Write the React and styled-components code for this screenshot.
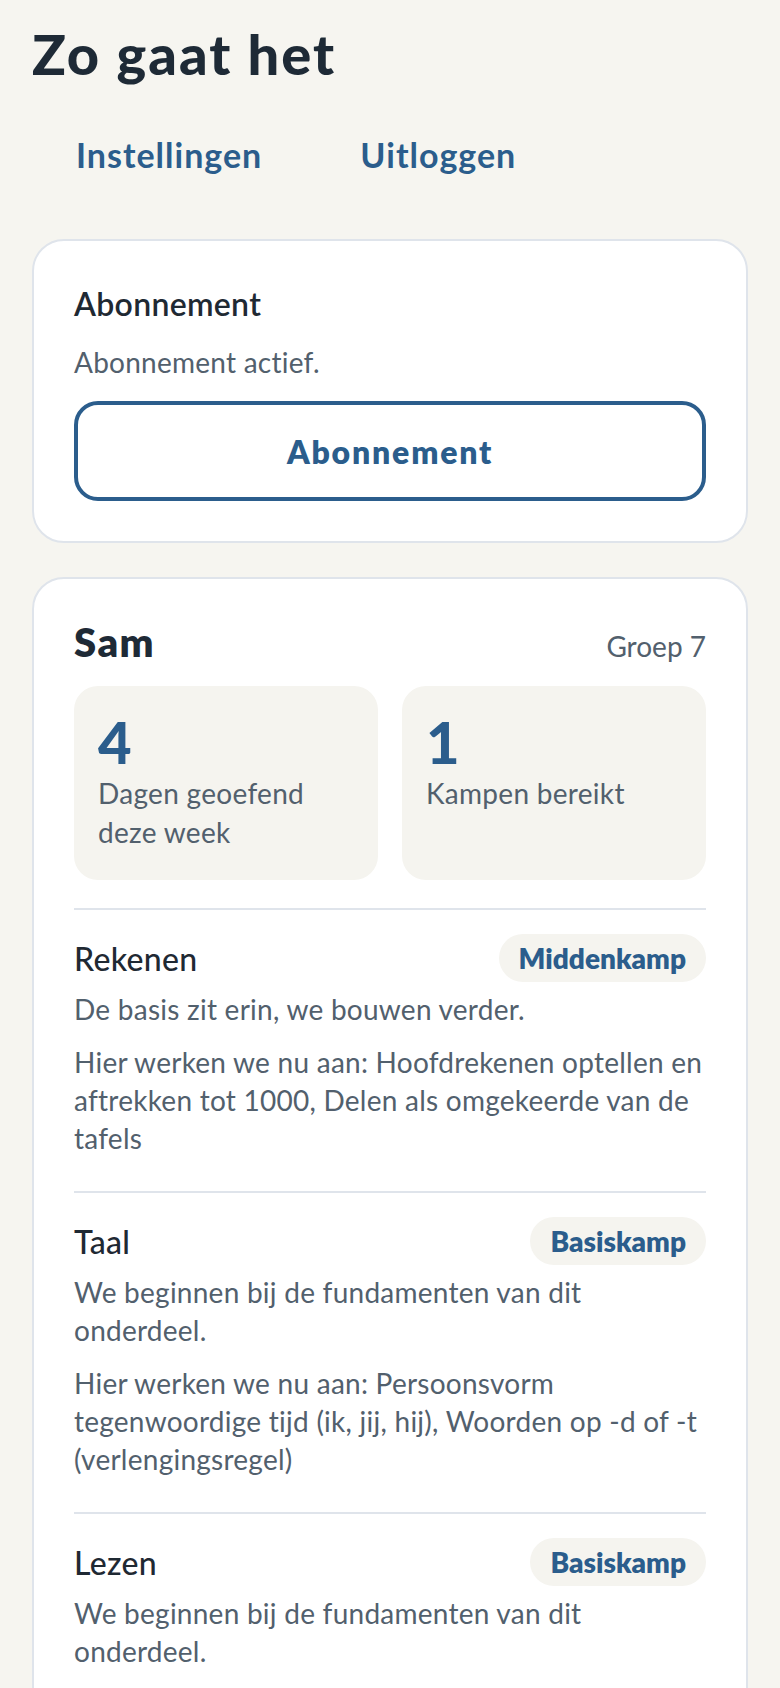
import React from "react";
import styled, { createGlobalStyle } from "styled-components";

const GlobalStyle = createGlobalStyle`
  html, body {
    margin: 0;
    padding: 0;
    background: #f6f5f0;
  }
  body {
    font-family: "Lato", "Noto Sans", sans-serif;
    color: #1f2933;
  }
`;

const subjects = [
  {
    name: "Rekenen",
    level: "Middenkamp",
    summary: "De basis zit erin, we bouwen verder.",
    focus:
      "Hier werken we nu aan: Hoofdrekenen optellen en aftrekken tot 1000, Delen als omgekeerde van de tafels",
  },
  {
    name: "Taal",
    level: "Basiskamp",
    summary: "We beginnen bij de fundamenten van dit onderdeel.",
    focus:
      "Hier werken we nu aan: Persoonsvorm tegenwoordige tijd (ik, jij, hij), Woorden op -d of -t (verlengingsregel)",
  },
  {
    name: "Lezen",
    level: "Basiskamp",
    summary: "We beginnen bij de fundamenten van dit onderdeel.",
    focus: "Hier werken we nu aan: Hoofdgedachte van een tekst, Verwijswoorden",
  },
];

export default function App() {
  return (
    <Page>
      <GlobalStyle />
      <Title>Zo gaat het</Title>
      <Nav>
        <NavButton>Instellingen</NavButton>
        <NavButton>Uitloggen</NavButton>
      </Nav>

      <Card>
        <CardTitle>Abonnement</CardTitle>
        <Muted>Abonnement actief.</Muted>
        <OutlineButton>Abonnement</OutlineButton>
      </Card>

      <Card>
        <ChildHeader>
          <ChildName>Sam</ChildName>
          <Group>Groep 7</Group>
        </ChildHeader>
        <Stats>
          <Stat>
            <StatValue>4</StatValue>
            <StatLabel>Dagen geoefend deze week</StatLabel>
          </Stat>
          <Stat>
            <StatValue>1</StatValue>
            <StatLabel>Kampen bereikt</StatLabel>
          </Stat>
        </Stats>
        {subjects.map((s) => (
          <Subject key={s.name}>
            <SubjectHeader>
              <SubjectName>{s.name}</SubjectName>
              <Badge>{s.level}</Badge>
            </SubjectHeader>
            <Text>{s.summary}</Text>
            <Text>{s.focus}</Text>
          </Subject>
        ))}
      </Card>
    </Page>
  );
}

const Page = styled.div`
  padding: 20px 32px 64px;
  min-height: 1688px;
  box-sizing: border-box;
`;

const Title = styled.h1`
  margin: 0;
  font-size: 56px;
  line-height: 67px;
  font-weight: 900;
  color: #1e2a36;
  letter-spacing: 2px;
`;

const Nav = styled.nav`
  display: flex;
  gap: 10px;
  margin-top: 22px;
`;

const NavButton = styled.button`
  height: 90px;
  padding: 0 44px;
  border: 0;
  background: transparent;
  font-family: inherit;
  font-size: 34px;
  font-weight: 700;
  letter-spacing: 1px;
  color: #2b5d8c;
  cursor: pointer;
`;

const Card = styled.section`
  margin-top: 40px;
  background: #ffffff;
  border: 2px solid #dfe4eb;
  border-radius: 32px;
  padding: 40px;

  & + & {
    margin-top: 34px;
  }
`;

const CardTitle = styled.h2`
  margin: 0;
  font-size: 32px;
  line-height: 45px;
  font-weight: 600;
  letter-spacing: 0.3px;
  color: #1f2933;
`;

const Muted = styled.p`
  margin: 17px 0 0;
  font-size: 28px;
  line-height: 38px;
  letter-spacing: 0.25px;
  color: #52606d;
`;

const OutlineButton = styled.button`
  display: block;
  width: 100%;
  height: 100px;
  margin-top: 20px;
  border: 4px solid #2b5d8c;
  border-radius: 24px;
  background: #ffffff;
  font-family: inherit;
  font-size: 32px;
  font-weight: 800;
  letter-spacing: 1.8px;
  color: #2b5d8c;
`;

const ChildHeader = styled.div`
  display: flex;
  justify-content: space-between;
  align-items: baseline;
  height: 46px;
`;

const ChildName = styled.h2`
  margin: 0;
  font-size: 40px;
  line-height: 46px;
  font-weight: 800;
  letter-spacing: 1.5px;
  color: #1e2a36;
`;

const Group = styled.span`
  font-size: 28px;
  color: #52606d;
`;

const Stats = styled.div`
  display: grid;
  grid-template-columns: 1fr 1fr;
  gap: 24px;
  margin-top: 21px;
  margin-bottom: 28px;
`;

const Stat = styled.div`
  background: #f5f4ef;
  border-radius: 24px;
  padding: 24px;
  min-height: 146px;
`;

const StatValue = styled.div`
  font-size: 58px;
  line-height: 64px;
  font-weight: 900;
  color: #2b5d8c;
`;

const StatLabel = styled.div`
  font-size: 28px;
  line-height: 39px;
  letter-spacing: 0.3px;
  color: #52606d;
`;

const Subject = styled.div`
  border-top: 2px solid #dfe4eb;
  padding: 24px 0 34px;
`;

const SubjectHeader = styled.div`
  display: flex;
  justify-content: space-between;
  align-items: center;
  margin-bottom: 8px;
`;

const SubjectName = styled.h3`
  margin: 0;
  font-size: 32px;
  font-weight: 500;
  letter-spacing: 0.3px;
  color: #1f2933;
`;

const Badge = styled.span`
  display: inline-flex;
  align-items: center;
  height: 48px;
  padding: 0 20px;
  border-radius: 999px;
  background: #f5f4ef;
  font-size: 28px;
  font-weight: 800;
  color: #2b5d8c;
`;

const Text = styled.p`
  margin: 0;
  font-size: 28px;
  line-height: 38px;
  letter-spacing: 0.25px;
  color: #52606d;

  & + & {
    margin-top: 15px;
  }
`;
